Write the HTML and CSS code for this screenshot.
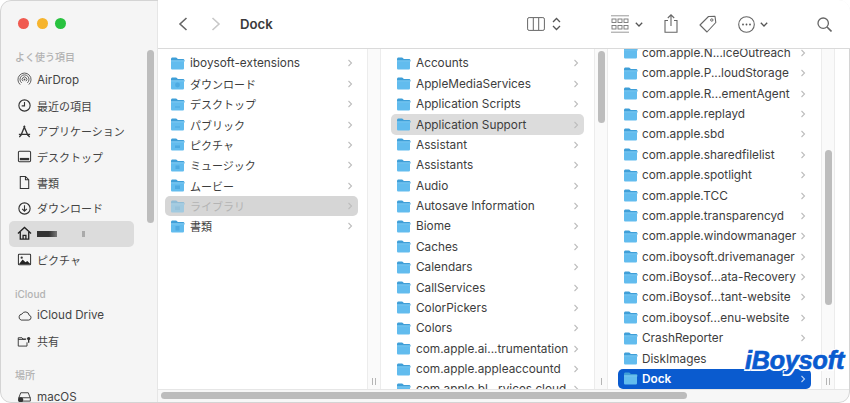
FILE: index.html
```html
<!DOCTYPE html>
<html lang="ja">
<head>
<meta charset="utf-8">
<title>Dock</title>
<link rel="stylesheet" href="styles.css">
</head>
<body>
<svg class="defs" width="0" height="0">
  <symbol id="folder" viewBox="0 0 15 13">
    <path d="M1 2.200C1 1.200 1.600.6 2.600.6h3.200c.7 0 1 .2 1.400.7l.5.6h5.200c1 0 1.600.6 1.600 1.600v1H1z" fill="#3f9fd8"/>
    <path d="M1 3.600h13v7.700c0 .8-.6 1.300-1.400 1.300H2.400c-.8 0-1.400-.5-1.400-1.300z" fill="#62bcee"/>
    <path d="M1 3.600h13v.6H1z" fill="#8fd2f5"/>
  </symbol>
  <symbol id="chev" viewBox="0 0 6 8">
    <path d="M1.500 1l3 3-3 3" fill="none" stroke="currentColor" stroke-width="1.100"/>
  </symbol>
</svg>
<div class="window">
  <aside class="sidebar">
    <div class="lights"><i class="light red"></i><i class="light yellow"></i><i class="light green"></i></div>
    <div class="side-body">
      <div class="side-list">
        <h2 class="side-head first">よく使う項目</h2>
        <div class="side-row"><svg class="side-icon" viewBox="0 0 16 16"><g fill="none" stroke="#555" stroke-width="1"><path d="M3.400 13.400a7 7 0 1 1 9.200 0"/><path d="M5 11.600a4.800 4.800 0 1 1 6 0"/><path d="M6.500 9.800a2.500 2.500 0 1 1 3 0"/></g><circle cx="8" cy="8" r="1" fill="#555"/></svg><span class="side-label">AirDrop</span></div>
        <div class="side-row"><svg class="side-icon" viewBox="0 0 16 16"><circle cx="8" cy="8" r="6" fill="none" stroke="#333" stroke-width="1.200"/><path d="M8 4.200V8.400H5" fill="none" stroke="#333" stroke-width="1.200"/></svg><span class="side-label jp">最近の項目</span></div>
        <div class="side-row"><svg class="side-icon" viewBox="0 0 16 16"><path d="M8.400 2L4 12.500M7.200 2l4.600 10.500M2 11h12M2.500 14l1.500-2M13.500 14L12 12" fill="none" stroke="#333" stroke-width="1.400"/></svg><span class="side-label jp">アプリケーション</span></div>
        <div class="side-row"><svg class="side-icon" viewBox="0 0 16 16"><rect x="1.500" y="2.500" width="13" height="11" rx="1.200" fill="none" stroke="#333" stroke-width="1.100"/><rect x="3" y="9.500" width="10" height="2.500" fill="#333"/></svg><span class="side-label jp">デスクトップ</span></div>
        <div class="side-row"><svg class="side-icon" viewBox="0 0 16 16"><path d="M3.500 1.500h5.500l3.500 3.500v9.500h-9zM9 1.500V5h3.500" fill="none" stroke="#333" stroke-width="1.100"/></svg><span class="side-label jp">書類</span></div>
        <div class="side-row"><svg class="side-icon" viewBox="0 0 16 16"><circle cx="8" cy="8" r="6" fill="none" stroke="#333" stroke-width="1.200"/><path d="M8 4.500v6M5.500 8.300L8 10.800l2.500-2.500" fill="none" stroke="#333" stroke-width="1.200"/></svg><span class="side-label jp">ダウンロード</span></div>
        <div class="side-row active"><svg class="side-icon" viewBox="0 0 16 16"><path d="M1 8l7-6.500L15 8M3.500 6.500V14h9V6.500M6.500 14v-4h3v4" fill="none" stroke="#222" stroke-width="1.400"/></svg><span class="mask-a"></span><span class="mask-b"></span></div>
        <div class="side-row"><svg class="side-icon" viewBox="0 0 16 16"><rect x="1.500" y="2.500" width="13" height="11" rx=".8" fill="none" stroke="#333" stroke-width="1.100"/><path d="M2 13l4-5 3 3 2-1.500 3.500 3.500z" fill="#222"/><circle cx="5" cy="6" r="1.200" fill="#333"/></svg><span class="side-label jp">ピクチャ</span></div>
        <h2 class="side-head">iCloud</h2>
        <div class="side-row"><svg class="side-icon wide" viewBox="0 0 18 14"><path d="M5 12.500h9a3 3 0 0 0 .6-5.900 4.600 4.600 0 0 0-8.700-1.300A3.700 3.700 0 0 0 5 12.500z" fill="none" stroke="#333" stroke-width="1.100"/></svg><span class="side-label">iCloud Drive</span></div>
        <div class="side-row"><svg class="side-icon wide" viewBox="0 0 18 14"><path d="M1.500 12.500V2.500h4.500l1 1.500h4M1.500 4.500h9M1.500 12.500h10.500V8" fill="none" stroke="#333" stroke-width="1.100"/><circle cx="14" cy="3.500" r="2" fill="#333"/><path d="M14 5v3.500" stroke="#333" stroke-width="1.600"/></svg><span class="side-label jp">共有</span></div>
        <h2 class="side-head">場所</h2>
        <div class="side-row"><svg class="side-icon wide" viewBox="0 0 18 14"><path d="M2 9l2.500-6.500h9L16 9v3.500H2zM2 8.500h14" fill="none" stroke="#333" stroke-width="1.100"/><circle cx="4.500" cy="11" r="3" fill="#333"/></svg><span class="side-label">macOS</span></div>
      </div>
      <div class="side-thumb"></div>
    </div>
  </aside>
  <main class="main">
    <header class="toolbar">
      <svg class="tb back" viewBox="0 0 12 16"><path d="M9.500 2L3 8l6.500 6" fill="none" stroke="#666" stroke-width="1.600"/></svg>
      <svg class="tb forward" viewBox="0 0 12 16"><path d="M2.500 2L9 8l-6.500 6" fill="none" stroke="#c8c8c8" stroke-width="1.600"/></svg>
      <h1 class="title">Dock</h1>
      <div class="tools">
        <svg class="tb t-cols" viewBox="0 0 18 14"><rect x=".6" y=".6" width="16.800" height="12.800" rx="1.500" fill="none" stroke="#666" stroke-width="1"/><path d="M6.300 1v12M11.700 1v12" stroke="#666" stroke-width="1"/></svg>
        <svg class="tb t-updown" viewBox="0 0 9 14"><path d="M1 5l3.500-3.500L8 5M1 9l3.500 3.500L8 9" fill="none" stroke="#555" stroke-width="1.300"/></svg>
        <svg class="tb t-group" viewBox="0 0 18 18"><path d="M0 .8h18M0 17.200h18" stroke="#999" stroke-width="1"/><g fill="none" stroke="#777" stroke-width=".9"><rect x="1" y="4" width="4" height="3.500"/><rect x="7" y="4" width="4" height="3.500"/><rect x="13" y="4" width="4" height="3.500"/><rect x="1" y="10.500" width="4" height="3.500"/><rect x="7" y="10.500" width="4" height="3.500"/><rect x="13" y="10.500" width="4" height="3.500"/></g></svg>
        <svg class="tb t-chev1" viewBox="0 0 8 5"><path d="M.8.800L4 4l3.200-3.200" fill="none" stroke="#555" stroke-width="1.300"/></svg>
        <svg class="tb t-share" viewBox="0 0 14 19"><path d="M4 6.500H1v11.700h12V6.500h-3M7 12V1M3.800 4L7 .8 10.200 4" fill="none" stroke="#666" stroke-width="1.100"/></svg>
        <svg class="tb t-tag" viewBox="0 0 18 18"><path d="M1 10L9.500 1.500 16 1.200l.8 6.300L8 17z" fill="none" stroke="#666" stroke-width="1.100" stroke-linejoin="round"/><circle cx="12.800" cy="5" r="1.200" fill="none" stroke="#666"/></svg>
        <svg class="tb t-more" viewBox="0 0 17 17"><circle cx="8.500" cy="8.500" r="7.800" fill="none" stroke="#666" stroke-width="1.100"/><circle cx="5" cy="8.500" r=".9" fill="#555"/><circle cx="8.500" cy="8.500" r=".9" fill="#555"/><circle cx="12" cy="8.500" r=".9" fill="#555"/></svg>
        <svg class="tb t-chev2" viewBox="0 0 8 5"><path d="M.8.800L4 4l3.200-3.200" fill="none" stroke="#555" stroke-width="1.300"/></svg>
        <svg class="tb t-search" viewBox="0 0 15 15"><circle cx="6.200" cy="6.200" r="5.200" fill="none" stroke="#666" stroke-width="1.300"/><path d="M10 10l4.500 4.500" stroke="#666" stroke-width="1.600"/></svg>
      </div>
    </header>
    <section class="columns">
      <div class="col col-one">
        <div class="list">
          <div class="row"><svg class="folder" viewBox="0 0 15 13"><use href="#folder"/></svg><span class="name">iboysoft-extensions</span><svg class="chev"><use href="#chev"/></svg></div>
          <div class="row"><svg class="folder" viewBox="0 0 15 13"><use href="#folder"/><circle class="emblem" cx="7.500" cy="8" r="2.400"/></svg><span class="name jp">ダウンロード</span><svg class="chev"><use href="#chev"/></svg></div>
          <div class="row"><svg class="folder" viewBox="0 0 15 13"><use href="#folder"/><rect class="emblem" x="5" y="8.500" width="5" height="1"/></svg><span class="name jp">デスクトップ</span><svg class="chev"><use href="#chev"/></svg></div>
          <div class="row"><svg class="folder" viewBox="0 0 15 13"><use href="#folder"/><rect class="emblem" x="5" y="8.500" width="5" height="1"/></svg><span class="name jp">パブリック</span><svg class="chev"><use href="#chev"/></svg></div>
          <div class="row"><svg class="folder" viewBox="0 0 15 13"><use href="#folder"/><rect class="emblem" x="5" y="7.500" width="5" height="2.500"/></svg><span class="name jp">ピクチャ</span><svg class="chev"><use href="#chev"/></svg></div>
          <div class="row"><svg class="folder" viewBox="0 0 15 13"><use href="#folder"/><rect class="emblem" x="5.500" y="6.500" width="4" height="3.500"/></svg><span class="name jp">ミュージック</span><svg class="chev"><use href="#chev"/></svg></div>
          <div class="row"><svg class="folder" viewBox="0 0 15 13"><use href="#folder"/><rect class="emblem" x="5" y="6.500" width="5" height="3.500"/></svg><span class="name jp">ムービー</span><svg class="chev"><use href="#chev"/></svg></div>
          <div class="row sel-dim"><svg class="folder" viewBox="0 0 15 13"><use href="#folder"/><rect class="emblem" x="5" y="6.500" width="5" height="3.500"/></svg><span class="name jp">ライブラリ</span><svg class="chev"><use href="#chev"/></svg></div>
          <div class="row"><svg class="folder" viewBox="0 0 15 13"><use href="#folder"/><rect class="emblem" x="5.500" y="6" width="4" height="4.500"/></svg><span class="name jp">書類</span><svg class="chev"><use href="#chev"/></svg></div>
        </div>
      </div>
      <div class="gutter"><span class="handle"></span></div>
      <div class="col">
        <div class="list">
          <div class="row"><svg class="folder"><use href="#folder"/></svg><span class="name">Accounts</span><svg class="chev"><use href="#chev"/></svg></div>
          <div class="row"><svg class="folder"><use href="#folder"/></svg><span class="name">AppleMediaServices</span><svg class="chev"><use href="#chev"/></svg></div>
          <div class="row"><svg class="folder"><use href="#folder"/></svg><span class="name">Application Scripts</span><svg class="chev"><use href="#chev"/></svg></div>
          <div class="row sel-grey"><svg class="folder"><use href="#folder"/></svg><span class="name">Application Support</span><svg class="chev"><use href="#chev"/></svg></div>
          <div class="row"><svg class="folder"><use href="#folder"/></svg><span class="name">Assistant</span><svg class="chev"><use href="#chev"/></svg></div>
          <div class="row"><svg class="folder"><use href="#folder"/></svg><span class="name">Assistants</span><svg class="chev"><use href="#chev"/></svg></div>
          <div class="row"><svg class="folder"><use href="#folder"/></svg><span class="name">Audio</span><svg class="chev"><use href="#chev"/></svg></div>
          <div class="row"><svg class="folder"><use href="#folder"/></svg><span class="name">Autosave Information</span><svg class="chev"><use href="#chev"/></svg></div>
          <div class="row"><svg class="folder"><use href="#folder"/></svg><span class="name">Biome</span><svg class="chev"><use href="#chev"/></svg></div>
          <div class="row"><svg class="folder"><use href="#folder"/></svg><span class="name">Caches</span><svg class="chev"><use href="#chev"/></svg></div>
          <div class="row"><svg class="folder"><use href="#folder"/></svg><span class="name">Calendars</span><svg class="chev"><use href="#chev"/></svg></div>
          <div class="row"><svg class="folder"><use href="#folder"/></svg><span class="name">CallServices</span><svg class="chev"><use href="#chev"/></svg></div>
          <div class="row"><svg class="folder"><use href="#folder"/></svg><span class="name">ColorPickers</span><svg class="chev"><use href="#chev"/></svg></div>
          <div class="row"><svg class="folder"><use href="#folder"/></svg><span class="name">Colors</span><svg class="chev"><use href="#chev"/></svg></div>
          <div class="row"><svg class="folder"><use href="#folder"/></svg><span class="name">com.apple.ai...trumentation</span><svg class="chev"><use href="#chev"/></svg></div>
          <div class="row"><svg class="folder"><use href="#folder"/></svg><span class="name">com.apple.appleaccountd</span><svg class="chev"><use href="#chev"/></svg></div>
          <div class="row"><svg class="folder"><use href="#folder"/></svg><span class="name">com.apple.bl...rvices.cloud</span><svg class="chev"><use href="#chev"/></svg></div>
        </div>
      </div>
      <div class="gutter"><div class="thumb thumb-two"></div><span class="handle single"></span></div>
      <div class="col">
        <div class="list list-scrolled">
          <div class="row"><svg class="folder"><use href="#folder"/></svg><span class="name">com.apple.N...iceOutreach</span><svg class="chev"><use href="#chev"/></svg></div>
          <div class="row"><svg class="folder"><use href="#folder"/></svg><span class="name">com.apple.P...loudStorage</span><svg class="chev"><use href="#chev"/></svg></div>
          <div class="row"><svg class="folder"><use href="#folder"/></svg><span class="name">com.apple.R...ementAgent</span><svg class="chev"><use href="#chev"/></svg></div>
          <div class="row"><svg class="folder"><use href="#folder"/></svg><span class="name">com.apple.replayd</span><svg class="chev"><use href="#chev"/></svg></div>
          <div class="row"><svg class="folder"><use href="#folder"/></svg><span class="name">com.apple.sbd</span><svg class="chev"><use href="#chev"/></svg></div>
          <div class="row"><svg class="folder"><use href="#folder"/></svg><span class="name">com.apple.sharedfilelist</span><svg class="chev"><use href="#chev"/></svg></div>
          <div class="row"><svg class="folder"><use href="#folder"/></svg><span class="name">com.apple.spotlight</span><svg class="chev"><use href="#chev"/></svg></div>
          <div class="row"><svg class="folder"><use href="#folder"/></svg><span class="name">com.apple.TCC</span><svg class="chev"><use href="#chev"/></svg></div>
          <div class="row"><svg class="folder"><use href="#folder"/></svg><span class="name">com.apple.transparencyd</span><svg class="chev"><use href="#chev"/></svg></div>
          <div class="row"><svg class="folder"><use href="#folder"/></svg><span class="name">com.apple.windowmanager</span><svg class="chev"><use href="#chev"/></svg></div>
          <div class="row"><svg class="folder"><use href="#folder"/></svg><span class="name">com.iboysoft.drivemanager</span><svg class="chev"><use href="#chev"/></svg></div>
          <div class="row"><svg class="folder"><use href="#folder"/></svg><span class="name">com.iBoysof...ata-Recovery</span><svg class="chev"><use href="#chev"/></svg></div>
          <div class="row"><svg class="folder"><use href="#folder"/></svg><span class="name">com.iBoysof...tant-website</span><svg class="chev"><use href="#chev"/></svg></div>
          <div class="row"><svg class="folder"><use href="#folder"/></svg><span class="name">com.iboysof...enu-website</span><svg class="chev"><use href="#chev"/></svg></div>
          <div class="row"><svg class="folder"><use href="#folder"/></svg><span class="name">CrashReporter</span><svg class="chev"><use href="#chev"/></svg></div>
          <div class="row"><svg class="folder"><use href="#folder"/></svg><span class="name">DiskImages</span></div>
          <div class="row sel-blue"><svg class="folder"><use href="#folder"/></svg><span class="name">Dock</span><svg class="chev"><use href="#chev"/></svg></div>
        </div>
      </div>
      <div class="gutter"><div class="thumb thumb-three"></div><span class="handle"></span></div>
      <div class="tail"></div>
    </section>
    <footer class="hscroll"><div class="hthumb"></div></footer>
  </main>
  <div class="logo">iBoysoft</div>
</div>
</body>
</html>
```

FILE: styles.css
```css
* { box-sizing: border-box; }
html, body { margin: 0; padding: 0; background: #fff; }
body { font-family: "Inter", "Noto Sans CJK JP", sans-serif; color: #3d3d3d; }
.defs { position: absolute; }

.window {
  position: relative;
  display: flex;
  width: 850px;
  height: 403px;
  overflow: hidden;
  border-radius: 11px;
  background: #fff;
}
.window::after {
  content: "";
  position: absolute;
  inset: 0;
  border: 1px solid #d4d4d4;
  border-radius: 11px;
  pointer-events: none;
}

.sidebar {
  flex: 0 0 158px;
  display: flex;
  flex-direction: column;
  background: #f5f5f5;
  border-right: 1px solid #e6e6e6;
  overflow: hidden;
}
.lights { display: flex; gap: 7.500px; padding: 18px 0 0 18px; height: 48px; flex: none; }
.light { width: 11px; height: 11px; border-radius: 50%; }
.red { background: #f05a50; }
.yellow { background: #f6b42d; }
.green { background: #28c23f; }

.side-body { display: flex; flex: 1; min-height: 0; }
.side-list { flex: 0 0 147px; padding-left: 9px; }
.side-head {
  margin: 0;
  height: 30px;
  padding: 15.500px 0 0 6px;
  font-size: 10px;
  line-height: 12px;
  font-weight: 500;
  color: #b2b2b2;
}
.side-head.first { height: 19px; padding-top: 3px; }
.side-row {
  display: flex;
  align-items: center;
  width: 125px;
  height: 25.700px;
  padding-left: 8px;
  font-size: 11.600px;
  color: #444;
  border-radius: 5px;
  white-space: nowrap;
}
.side-label { margin-left: 5px; }
.side-row .jp { font-size: 11px; }
.side-row.active { background: #dcdcdc; }
.side-icon { flex: none; width: 15px; height: 15px; }
.side-icon.wide { width: 15px; height: 13px; }
.mask-a { width: 20px; height: 6px; margin-left: 5px; background: linear-gradient(90deg, #333 60%, #777); }
.mask-b { width: 3px; height: 6px; margin-left: 25px; background: #aaa; }
.side-thumb { width: 7px; height: 173px; margin-top: 2px; border-radius: 4px; background: #bdbdbd; }

.main { flex: 1; min-width: 0; display: flex; flex-direction: column; }
.toolbar {
  flex: none;
  display: flex;
  align-items: center;
  height: 49px;
  padding-left: 19px;
  border-bottom: 1px solid #dadada;
  position: relative;
  z-index: 1;
  background: #fff;
}
.tb { flex: none; display: block; }
.back, .forward { width: 12px; height: 16px; }
.forward { margin-left: 21px; }
.title { margin: 0 0 0 18px; font-size: 13.200px; font-weight: 600; color: #3a3a3a; }
.tools { margin-left: auto; display: flex; align-items: center; padding-right: 18px; }
.t-cols { width: 18px; height: 14px; }
.t-updown { width: 9px; height: 14px; margin-left: 7px; }
.t-group { width: 18px; height: 18px; margin-left: 50px; }
.t-chev1 { width: 8px; height: 5px; margin-left: 6px; }
.t-share { width: 14px; height: 19px; margin-left: 21px; margin-top: -2px; }
.t-tag { width: 18px; height: 18px; margin-left: 21px; }
.t-more { width: 17px; height: 17px; margin-left: 21px; }
.t-chev2 { width: 8px; height: 5px; margin-left: 5px; }
.t-search { width: 15px; height: 15px; margin-left: 49px; }

.columns { flex: 1; min-height: 0; display: flex; }
.col { flex: 0 0 213px; padding: 4.200px 0 0 10px; overflow: hidden; }
.col-one { flex: 0 0 209px; padding-left: 7px; }
.list { display: flex; flex-direction: column; width: 193px; }
.list-scrolled { margin-top: -10.400px; }
.list-scrolled .name { margin-left: 4px; }
.row {
  flex: none;
  display: flex;
  align-items: center;
  height: 20.375px;
  padding: 0 5px;
  font-size: 11.800px;
  border-radius: 5px;
  color: #3d3d3d;
  white-space: nowrap;
}
.folder { flex: none; width: 15px; height: 13px; }
.emblem { fill: #3f9fd8; opacity: .6; }
.name { flex: 1; min-width: 0; margin-left: 5px; overflow: hidden; }
.row .jp { font-size: 11px; }
.chev { flex: none; width: 6px; height: 8px; color: #bdbdbd; }
.sel-grey { background: #dcdcdc; }
.sel-dim { background: #d6d6d6; color: #b4b4b4; }
.sel-dim .folder { opacity: .45; }
.sel-blue { background: #0a5bcf; color: #fff; font-weight: 600; }
.sel-blue .chev { color: #b9d2f3; }

.gutter {
  flex: 0 0 14px;
  display: flex;
  flex-direction: column;
  align-items: center;
  background: #fafafa;
  border-left: 1px solid #ececec;
  border-right: 1px solid #ececec;
}
.thumb { width: 7px; border-radius: 4px; background: #bdbdbd; }
.thumb-two { height: 72px; margin-top: 2px; }
.thumb-three { height: 155px; margin-top: 101px; }
.handle {
  margin-top: auto;
  margin-bottom: 4px;
  width: 4px;
  height: 7px;
  border-left: 1px solid #b5b5b5;
  border-right: 1px solid #b5b5b5;
}
.handle.single { width: 1px; border-right: 0; }
.tail { flex: 1; background: #fff; }

.hscroll {
  flex: none;
  height: 14px;
  padding: 2px 0 0 3px;
  background: #f7f7f7;
  border-top: 1px solid #e6e6e6;
}
.hthumb { width: 526px; height: 7px; border-radius: 4px; background: #bcbcbc; }

.logo {
  position: absolute;
  left: 745px;
  top: 345px;
  font-family: "Liberation Sans", sans-serif;
  font-size: 25px;
  line-height: 30px;
  font-weight: 700;
  font-style: italic;
  letter-spacing: -.1px;
  color: #0a5bcf;
  -webkit-text-stroke: .7px #0a5bcf;
  text-shadow: 1.500px 1.500px 0 #fff, -1.500px -1.500px 0 #fff, 1.500px -1.500px 0 #fff, -1.500px 1.500px 0 #fff;
}
```
